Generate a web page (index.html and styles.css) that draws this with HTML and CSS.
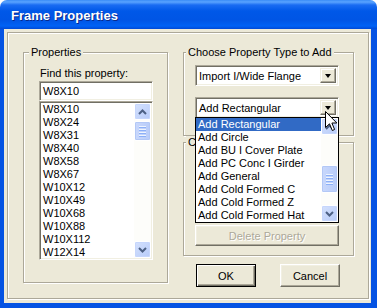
FILE: index.html
```html
<!DOCTYPE html>
<html lang="en">
<head>
    <meta charset="UTF-8">
    <title>Frame Properties</title>
    <link rel="stylesheet" href="styles.css">
</head>
<body>

<div class="window">
    <div class="titlebar">Frame Properties</div>
    <div class="client">
        <div class="frame">

            <div class="group props">
                <div class="group-title">Properties</div>
                <div class="find-label">Find this property:</div>
                <div class="edit">W8X10</div>
                <div class="listbox">
                    <ul class="items">
                        <li>W8X10</li>
                        <li>W8X24</li>
                        <li>W8X31</li>
                        <li>W8X40</li>
                        <li>W8X58</li>
                        <li>W8X67</li>
                        <li>W10X12</li>
                        <li>W10X49</li>
                        <li>W10X68</li>
                        <li>W10X88</li>
                        <li>W10X112</li>
                        <li>W12X14</li>
                    </ul>
                    <div class="vscroll">
                        <div class="sb-btn"><svg width="9" height="6" viewBox="0 0 9 6"><path d="M1 5 L4.5 1.5 L8 5" fill="none" stroke="#4d6185" stroke-width="2"/></svg></div>
                        <div class="sb-thumb list-thumb"><span></span><span></span><span></span><span></span></div>
                        <div class="sb-track"></div>
                        <div class="sb-btn"><svg width="9" height="6" viewBox="0 0 9 6"><path d="M1 1 L4.5 4.5 L8 1" fill="none" stroke="#4d6185" stroke-width="2"/></svg></div>
                    </div>
                </div>
            </div>

            <div class="right-col">
                <div class="group choose">
                    <div class="group-title">Choose Property Type to Add</div>
                    <div class="combo first">
                        <span class="combo-text">Import I/Wide Flange</span>
                        <span class="combo-btn"><i class="tri"></i></span>
                    </div>
                    <div class="combo-wrap">
                        <div class="combo">
                            <span class="combo-text">Add Rectangular</span>
                            <span class="combo-btn"><i class="tri"></i></span>
                        </div>
                        <div class="dropdown">
                            <ul class="options">
                                <li class="selected">Add Rectangular</li>
                                <li>Add Circle</li>
                                <li>Add BU I Cover Plate</li>
                                <li>Add PC Conc I Girder</li>
                                <li>Add General</li>
                                <li>Add Cold Formed C</li>
                                <li>Add Cold Formed Z</li>
                                <li>Add Cold Formed Hat</li>
                            </ul>
                            <div class="vscroll">
                                <div class="sb-btn"><svg width="9" height="6" viewBox="0 0 9 6"><path d="M1 5 L4.5 1.5 L8 5" fill="none" stroke="#4d6185" stroke-width="2"/></svg></div>
                                <div class="sb-track drop-gap"></div>
                                <div class="sb-thumb drop-thumb"><span></span><span></span><span></span><span></span></div>
                                <div class="sb-track"></div>
                                <div class="sb-btn"><svg width="9" height="6" viewBox="0 0 9 6"><path d="M1 1 L4.5 4.5 L8 1" fill="none" stroke="#4d6185" stroke-width="2"/></svg></div>
                            </div>
                        </div>
                        <svg class="cursor" width="13" height="21" viewBox="0 0 13 21">
                            <path d="M0.5 0.5 L0.5 16.5 L4.5 12.8 L7.3 19.5 L9.6 18.5 L6.9 12 L11.8 12 Z" fill="#fff" stroke="#000" stroke-width="1"/>
                        </svg>
                    </div>
                </div>

                <div class="group click">
                    <div class="group-title">C</div>
                    <button class="btn wide" disabled>Delete Property</button>
                </div>

                <div class="actions">
                    <button class="btn default">OK</button>
                    <button class="btn">Cancel</button>
                </div>
            </div>

        </div>
    </div>
</div>

</body>
</html>
```

FILE: styles.css
```css
/* XP style dialog */
body {
    margin: 0;
    background: #fff;
}
.window {
    width: 377px;
    height: 308px;
    display: flex;
    flex-direction: column;
    font-family: "Liberation Sans", Arial, sans-serif;
    font-size: 11px;
    color: #000;
}
.titlebar {
    flex: none;
    height: 29px;
    box-sizing: border-box;
    padding: 8px 0 0 11px;
    line-height: 15px;
    border-radius: 7px 7px 0 0;
    background: linear-gradient(to bottom, #3a8cf6 0, #5aa4ff 2px, #1a6cf2 5px, #0058e8 11px, #0055e5 20px, #0062f5 26px, #0049d6 29px);
    color: #fff;
    font-weight: bold;
    font-size: 13px;
    text-shadow: 1px 1px 0 #0a2a8c;
}
.client {
    flex: 1;
    display: flex;
    flex-direction: column;
    background: #ece9d8;
    border-style: solid;
    border-color: #0553e3;
    border-width: 0 6px 5px 4px;
}
.frame {
    flex: 1;
    display: flex;
    align-items: flex-start;
    gap: 15px;
    margin: 3px 2px 4px 3px;
    padding: 19px 0 0 15px;
    border: 1px solid #aca899;
    box-shadow: inset 1px 1px 0 #fff, 1px 1px 0 #fff;
}

/* group boxes */
.group {
    box-sizing: border-box;
    border: 1px solid #aca899;
    box-shadow: inset 1px 1px 0 #fff, 1px 1px 0 #fff;
}
.group-title {
    width: max-content;
    margin: -7px 0 0 -9px;
    padding: 0 2px;
    line-height: 13px;
    background: #ece9d8;
}
.props {
    width: 145px;
    height: 231px;
    padding-left: 15px;
}
.props .group-title {
    margin-left: -10px;
}
.find-label {
    margin-top: 8px;
    padding-left: 1px;
    line-height: 13px;
}

/* sunken boxes */
.edit,
.listbox,
.combo {
    box-sizing: border-box;
    width: 114px;
    background: #fff;
    border: 1px solid;
    border-color: #aca899 #fff #fff #aca899;
    box-shadow: inset 1px 1px 0 #716f64, inset -1px -1px 0 #f1efe2;
}
.edit {
    height: 20px;
    margin-top: 1px;
    padding: 1px 0 0 3px;
    line-height: 16px;
}
.listbox {
    height: 159px;
    display: flex;
    padding: 1px;
}
.items,
.options {
    flex: 1;
    list-style: none;
    margin: 0;
    padding: 0;
}
.items li {
    height: 13px;
    line-height: 13px;
    padding-left: 2px;
}

/* scrollbars */
.vscroll {
    width: 17px;
    display: flex;
    flex-direction: column;
    background: #fdfdfa;
}
.sb-btn {
    flex: none;
    box-sizing: border-box;
    height: 17px;
    display: flex;
    align-items: center;
    justify-content: center;
    border: 1px solid #fff;
    border-radius: 2px;
    background: linear-gradient(to bottom right, #d4e1fd, #b7cbf9);
    box-shadow: inset 0 0 0 1px #c6d6fc;
}
.sb-thumb {
    flex: none;
    box-sizing: border-box;
    display: flex;
    flex-direction: column;
    align-items: center;
    justify-content: center;
    gap: 1px;
    border: 1px solid #fff;
    border-radius: 2px;
    background: linear-gradient(to right, #c9d8fc, #b8ccf9);
    box-shadow: inset 0 0 0 1px #b3c8f6;
}
.sb-thumb span {
    width: 7px;
    height: 1px;
    background: #eef4fe;
    border-bottom: 1px solid #8cb0f8;
}
.sb-track {
    flex: 1;
}
.list-thumb {
    height: 20px;
    margin-top: 1px;
}
.drop-gap {
    flex: none;
    height: 30px;
}
.drop-thumb {
    height: 28px;
}

/* right side */
.right-col {
    width: 171px;
    display: flex;
    flex-direction: column;
}
.choose {
    height: 84px;
    padding-left: 11px;
}
.combo {
    width: 144px;
    height: 21px;
    display: flex;
    padding: 2px;
}
.combo.first {
    margin-top: 6px;
}
.combo-wrap {
    position: relative;
    margin-top: 11px;
    width: 144px;
}
.combo-text {
    flex: 1;
    padding-left: 1px;
    line-height: 17px;
}
.combo-btn {
    width: 16px;
    display: flex;
    align-items: center;
    justify-content: center;
    box-sizing: border-box;
    background: #ece9d8;
    border: 1px solid;
    border-color: #f1efe2 #716f64 #716f64 #f1efe2;
    box-shadow: inset -1px -1px 0 #aca899, inset 1px 1px 0 #fff;
}
.tri {
    width: 0;
    height: 0;
    border-left: 3.5px solid transparent;
    border-right: 3.5px solid transparent;
    border-top: 4px solid #000;
}
.dropdown {
    position: absolute;
    top: 20px;
    left: 0;
    z-index: 10;
    box-sizing: border-box;
    width: 144px;
    display: flex;
    background: #fff;
    border: 1px solid #000;
}
.options li {
    height: 13px;
    line-height: 13px;
    padding-left: 2px;
    white-space: nowrap;
}
.options li.selected {
    background: #316ac5;
    color: #fff;
}
.cursor {
    position: absolute;
    left: 130px;
    top: 14px;
    z-index: 20;
}

.click {
    height: 114px;
    margin-top: 6px;
    padding-left: 11px;
}
.btn {
    box-sizing: border-box;
    font-family: "Liberation Sans", Arial, sans-serif;
    font-size: 11px;
    color: #000;
    padding: 0;
    background: #ece9d8;
    border: 1px solid;
    border-color: #fff #716f64 #716f64 #fff;
    box-shadow: inset -1px -1px 0 #aca899, inset 1px 1px 0 #f1efe2;
}
.btn.wide {
    display: block;
    width: 144px;
    height: 21px;
    margin-top: 76px;
}
.btn:disabled {
    color: #aca899;
    text-shadow: 1px 1px 0 #fff;
}
.actions {
    display: flex;
    gap: 24px;
    margin-top: 8px;
    padding-left: 13px;
}
.actions .btn {
    width: 60px;
    height: 23px;
}
.btn.default {
    border-color: #000;
    box-shadow: inset 1px 1px 0 #fff, inset -1px -1px 0 #716f64, inset -2px -2px 0 #aca899;
}
```
